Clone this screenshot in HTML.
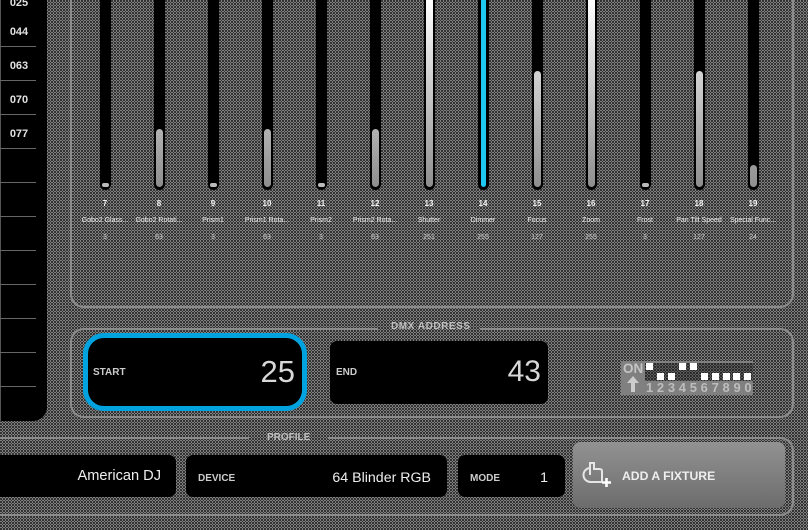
<!DOCTYPE html>
<html><head><meta charset="utf-8"><style>
html,body{margin:0;padding:0}
body{width:808px;height:530px;overflow:hidden;position:relative;background:#555;font-family:"Liberation Sans",sans-serif;color:#fff}
.a{position:absolute}
.side{left:0;top:-20px;width:47px;height:441px;background:#000;border-bottom-right-radius:14px;box-shadow:inset 1px 0 0 #555}
.ln{left:0;width:36px;height:1px;background:#666}
.id{left:0;width:38px;text-align:center;font-size:11px;font-weight:bold;color:#e2e2e2;line-height:14px}
.frame{box-sizing:border-box;border:2px solid #8c8c8c}
.tr{top:-10px;width:11px;height:200px;background:#000;border-radius:0 0 6px 6px}
.fill{left:2px;width:7px;bottom:3px;border-radius:4px;background:linear-gradient(#fff,#8e8e8e);background-size:7px 187px;background-position:bottom}
.knob{left:2px;width:7px;bottom:3px;height:4px;border-radius:2px;background:#bbb}
.n,.l,.v{width:70px;text-align:center;white-space:nowrap}
.n{top:199px;font-size:8px;font-weight:bold;line-height:10px;color:#f4f4f4}
.l{top:216px;font-size:7px;line-height:9px;color:#f0f0f0}
.v{top:233px;font-size:7px;line-height:9px;color:#d0d0d0}
.leg{font-size:10px;font-weight:bold;color:#c0c0c0;line-height:12px;white-space:nowrap}
.box{background:#000;border-radius:7px}
.lab{font-size:10px;font-weight:bold;color:#ccc;line-height:12px}
.val{text-align:right;color:#eee;white-space:nowrap}
.sq{width:7px;height:7px;background:#fff}
</style></head><body>
<svg class="a" style="left:0;top:0" width="808" height="530">
<defs>
<pattern id="p" width="3" height="3" patternUnits="userSpaceOnUse"><rect width="3" height="3" fill="#7f7f7f"/><rect width="2" height="2" fill="#333"/><rect x="2" y="2" width="1" height="1" fill="#333"/></pattern>
<pattern id="q" width="3" height="3" patternUnits="userSpaceOnUse"><rect width="3" height="3" fill="#5e5e5e"/><rect width="2" height="2" fill="#2a2a2a"/><rect x="2" y="2" width="1" height="1" fill="#2a2a2a"/></pattern>
</defs>
<rect width="808" height="530" fill="url(#p)" shape-rendering="crispEdges"/>
</svg>

<div class="a side"></div>
<div class="a id" style="top:-4px">025</div>
<div class="a id" style="top:25px">044</div>
<div class="a id" style="top:59px">063</div>
<div class="a id" style="top:93px">070</div>
<div class="a id" style="top:127px">077</div>
<div class="a ln" style="top:46px"></div><div class="a ln" style="top:80px"></div><div class="a ln" style="top:114px"></div><div class="a ln" style="top:148px"></div><div class="a ln" style="top:182px"></div><div class="a ln" style="top:216px"></div><div class="a ln" style="top:250px"></div><div class="a ln" style="top:284px"></div><div class="a ln" style="top:318px"></div><div class="a ln" style="top:352px"></div><div class="a ln" style="top:386px"></div>

<div class="a frame" style="left:70px;top:-30px;width:724px;height:338px;border-radius:14px"></div>

<div class="a tr" style="left:100px"><div class="a knob"></div></div>
<div class="a tr" style="left:154px"><div class="a fill" style="height:58px"></div></div>
<div class="a tr" style="left:208px"><div class="a knob"></div></div>
<div class="a tr" style="left:262px"><div class="a fill" style="height:58px"></div></div>
<div class="a tr" style="left:316px"><div class="a knob"></div></div>
<div class="a tr" style="left:370px"><div class="a fill" style="height:58px"></div></div>
<div class="a tr" style="left:424px"><div class="a fill" style="height:197px"></div></div>
<div class="a tr" style="left:478px"><div class="a fill" style="left:3px;width:5px;height:197px;background:#1fc8f0"></div></div>
<div class="a tr" style="left:532px"><div class="a fill" style="height:116px"></div></div>
<div class="a tr" style="left:586px"><div class="a fill" style="height:197px"></div></div>
<div class="a tr" style="left:640px"><div class="a knob"></div></div>
<div class="a tr" style="left:694px"><div class="a fill" style="height:116px"></div></div>
<div class="a tr" style="left:748px"><div class="a fill" style="height:22px"></div></div>

<div class="a n" style="left:70px">7</div><div class="a l" style="left:70px">Gobo2 Glass...</div><div class="a v" style="left:70px">3</div>
<div class="a n" style="left:124px">8</div><div class="a l" style="left:124px">Gobo2 Rotati...</div><div class="a v" style="left:124px">63</div>
<div class="a n" style="left:178px">9</div><div class="a l" style="left:178px">Prism1</div><div class="a v" style="left:178px">3</div>
<div class="a n" style="left:232px">10</div><div class="a l" style="left:232px">Prism1 Rota...</div><div class="a v" style="left:232px">63</div>
<div class="a n" style="left:286px">11</div><div class="a l" style="left:286px">Prism2</div><div class="a v" style="left:286px">3</div>
<div class="a n" style="left:340px">12</div><div class="a l" style="left:340px">Prism2 Rota...</div><div class="a v" style="left:340px">63</div>
<div class="a n" style="left:394px">13</div><div class="a l" style="left:394px">Shutter</div><div class="a v" style="left:394px">251</div>
<div class="a n" style="left:448px">14</div><div class="a l" style="left:448px">Dimmer</div><div class="a v" style="left:448px">255</div>
<div class="a n" style="left:502px">15</div><div class="a l" style="left:502px">Focus</div><div class="a v" style="left:502px">127</div>
<div class="a n" style="left:556px">16</div><div class="a l" style="left:556px">Zoom</div><div class="a v" style="left:556px">255</div>
<div class="a n" style="left:610px">17</div><div class="a l" style="left:610px">Frost</div><div class="a v" style="left:610px">3</div>
<div class="a n" style="left:664px">18</div><div class="a l" style="left:664px">Pan Tilt Speed</div><div class="a v" style="left:664px">127</div>
<div class="a n" style="left:718px">19</div><div class="a l" style="left:718px">Special Func...</div><div class="a v" style="left:718px">24</div>

<div class="a frame" style="left:70px;top:328px;width:724px;height:90px;border-radius:14px"></div>
<svg class="a" style="left:378px;top:324px" width="102" height="9"><rect width="102" height="9" fill="url(#p)" shape-rendering="crispEdges"/></svg>
<div class="a leg" style="left:391px;top:321px;letter-spacing:.55px">DMX ADDRESS</div>

<div class="a" style="left:83px;top:333px;width:224px;height:78px;box-sizing:border-box;border:5px solid #00a3e0;border-radius:21px;background:#000"></div>
<div class="a lab" style="left:93px;top:367px">START</div>
<div class="a val" style="left:200px;width:95px;top:352px;font-size:31px;line-height:40px;color:#d8d8d8">25</div>

<div class="a box" style="left:330px;top:341px;width:218px;height:63px"></div>
<div class="a lab" style="left:336px;top:367px">END</div>
<div class="a val" style="left:446px;width:95px;top:352px;font-size:30px;line-height:40px;color:#d8d8d8">43</div>

<div class="a" style="left:621px;top:361px;width:132px;height:34px;background:#808080"></div>
<svg class="a" style="left:645px;top:363px" width="108" height="18"><rect width="108" height="18" fill="url(#q)" shape-rendering="crispEdges"/></svg>
<div class="a" style="left:623px;top:362px;font-size:13.5px;font-weight:bold;line-height:14px;color:#c4c4c4">ON</div>
<svg class="a" style="left:626px;top:375px" width="14" height="18" viewBox="0 0 14 18"><path d="M7 1L13 8H9V17H5V8H1Z" fill="#ccc"/></svg>
<div class="a sq" style="left:646px;top:363px"></div>
<div class="a sq" style="left:657px;top:373px"></div>
<div class="a sq" style="left:668px;top:373px"></div>
<div class="a sq" style="left:679px;top:363px"></div>
<div class="a sq" style="left:690px;top:363px"></div>
<div class="a sq" style="left:701px;top:373px"></div>
<div class="a sq" style="left:712px;top:373px"></div>
<div class="a sq" style="left:723px;top:373px"></div>
<div class="a sq" style="left:733px;top:373px"></div>
<div class="a sq" style="left:744px;top:373px"></div>
<div class="a" style="left:646px;top:381px;font-size:13px;font-weight:bold;line-height:14px;color:#bdbdbd;letter-spacing:3.7px;white-space:nowrap">1234567890</div>

<div class="a frame" style="left:-30px;top:437px;width:824px;height:79px;border-radius:14px"></div>
<svg class="a" style="left:249px;top:435px" width="79" height="6"><rect width="79" height="6" fill="url(#p)" shape-rendering="crispEdges"/></svg>
<div class="a leg" style="left:267px;top:432px">PROFILE</div>

<div class="a box" style="left:-10px;top:455px;width:186px;height:42px"></div>
<div class="a val" style="left:40px;width:121px;top:467px;font-size:14.6px;line-height:18px">American DJ</div>
<div class="a box" style="left:186px;top:455px;width:261px;height:42px"></div>
<div class="a lab" style="left:198px;top:473px">DEVICE</div>
<div class="a val" style="left:300px;width:131px;top:469px;font-size:14.2px;line-height:18px">64 Blinder RGB</div>
<div class="a box" style="left:458px;top:455px;width:107px;height:42px"></div>
<div class="a lab" style="left:470px;top:473px">MODE</div>
<div class="a val" style="left:500px;width:48px;top:469px;font-size:14.2px;line-height:18px">1</div>

<div class="a" style="left:573px;top:442px;width:212px;height:66px;border-radius:7px;background:linear-gradient(#929292,#6c6c6c)"></div>
<svg class="a" style="left:582px;top:461px" width="30" height="28" viewBox="0 0 30 28" fill="none" stroke="#e6e6e6" stroke-width="2"><path d="M8 7A7 7 0 0 0 9 21H20V10Q20 8 17 8H12V2H8V14"/><path d="M24.5 17V26M20 21.5H29" stroke="#fff" stroke-width="2.6"/></svg>
<div class="a" style="left:622px;top:468px;font-size:12.2px;font-weight:bold;line-height:16px;color:#eee;white-space:nowrap">ADD A FIXTURE</div>
</body></html>
